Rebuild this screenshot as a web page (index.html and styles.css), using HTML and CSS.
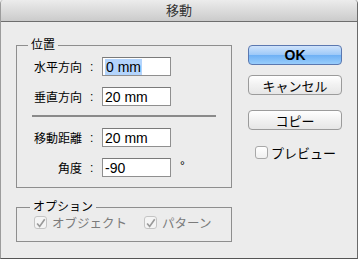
FILE: index.html
```html
<!DOCTYPE html>
<html lang="ja">
<head>
  <meta charset="UTF-8">
  <title>移動</title>
  <link rel="stylesheet" href="styles.css">
</head>
<body>
  <div class="window">
    <div class="titlebar">移動</div>

    <div class="dialog">
      <div class="main">
        <fieldset class="group group-position">
          <legend>位置</legend>
          <div class="row">
            <span class="label">水平方向</span><span class="colon">:</span>
            <div class="field"><span class="selected">0 mm</span></div>
          </div>
          <div class="row">
            <span class="label">垂直方向</span><span class="colon">:</span>
            <div class="field">20 mm</div>
          </div>
          <div class="separator"></div>
          <div class="row">
            <span class="label">移動距離</span><span class="colon">:</span>
            <div class="field">20 mm</div>
          </div>
          <div class="row">
            <span class="label">角度</span><span class="colon">:</span>
            <div class="field">-90</div>
            <span class="unit">°</span>
          </div>
        </fieldset>

        <fieldset class="group group-options">
          <legend>オプション</legend>
          <div class="check-row">
            <label class="check disabled">
              <span class="box">
                <svg width="13" height="13" viewBox="0 0 13 13"><path d="M2.5 6.5 L5.5 10 L11.5 1.5" fill="none" stroke="#9a9a9a" stroke-width="2"/></svg>
              </span>オブジェクト
            </label>
            <label class="check disabled">
              <span class="box">
                <svg width="13" height="13" viewBox="0 0 13 13"><path d="M2.5 6.5 L5.5 10 L11.5 1.5" fill="none" stroke="#9a9a9a" stroke-width="2"/></svg>
              </span>パターン
            </label>
          </div>
        </fieldset>
      </div>

      <div class="side">
        <button class="btn btn-default">OK</button>
        <button class="btn btn-cancel">キャンセル</button>
        <button class="btn btn-copy">コピー</button>
        <label class="check preview"><span class="box"></span>プレビュー</label>
      </div>
    </div>
  </div>
</body>
</html>
```

FILE: styles.css
```css
body {
  margin: 0;
  font-family: 'Liberation Sans', 'Noto Sans CJK JP', sans-serif;
  font-size: 12px;
  color: #000;
  background: #ececec;
}

.window {
  width: 358px;
  height: 259px;
  box-sizing: border-box;
  background: #ececec;
  border-left: 1px solid #9c9c9c;
  border-right: 1px solid #6a6a6a;
  border-bottom: 1px solid #555;
  border-radius: 4px 4px 0 0;
  overflow: hidden;
}

.titlebar {
  height: 21px;
  line-height: 21px;
  text-align: center;
  font-size: 13px;
  color: #333;
  background: linear-gradient(#ececec, #cbcbcb);
  border-bottom: 1px solid #6e6e6e;
}

.dialog {
  display: flex;
  gap: 16px;
}

.main {
  padding: 16px 0 0 15px;
  display: flex;
  flex-direction: column;
  gap: 12px;
}

.group {
  width: 216px;
  box-sizing: border-box;
  margin: 0;
  min-width: 0;
  border: 1px solid #8e8e8e;
  padding: 5px 15px 10px;
}

.group legend {
  margin-left: -4px;
  padding: 0 3px;
  line-height: 14px;
  font-size: 12px;
}

.row {
  display: flex;
  align-items: center;
  height: 19px;
  margin-bottom: 11px;
}

.row:last-child {
  margin-bottom: 0;
}

.label {
  width: 50px;
  text-align: right;
}

.colon {
  width: 20px;
  padding-left: 8px;
  box-sizing: border-box;
}

.field {
  width: 69px;
  height: 19px;
  box-sizing: border-box;
  background: #fff;
  border: 1px solid #8f8f8f;
  border-top-color: #7a7a7a;
  padding: 1px 0 0 2px;
  font-size: 14px;
  line-height: 16px;
}

.selected {
  background: #b3d4fc;
  padding: 0 1px;
}

.unit {
  margin: -4px 0 0 9px;
  font-size: 12px;
}

.separator {
  height: 2px;
  background: #8a8a8a;
  margin: -2px 0 11px;
}

.group-options {
  padding: 1px 15px 11px 17px;
}

.check-row {
  display: flex;
  gap: 17px;
}

.check {
  display: flex;
  align-items: center;
  gap: 5px;
  height: 15px;
  font-size: 12.5px;
}

.check.disabled {
  color: #7b7b7b;
}

.box {
  width: 13px;
  height: 13px;
  box-sizing: border-box;
  border: 1px solid #a8a8a8;
  border-radius: 3px;
  background: linear-gradient(#fff, #f0f0f0);
  display: flex;
}

.check.disabled .box {
  border-color: #c4c4c4;
  background: #f4f4f4;
}

.side {
  padding-top: 23px;
  display: flex;
  flex-direction: column;
}

.btn {
  width: 94px;
  height: 20px;
  margin: 0;
  padding: 0;
  font-family: inherit;
  font-size: 13px;
  color: #000;
  border: 1px solid #9b9b9b;
  border-radius: 4px;
  background: linear-gradient(#ffffff, #f1f1f1 50%, #e6e6e6);
}

.btn-default {
  font-weight: bold;
  font-size: 14px;
  border-color: #5b78b0;
  background: linear-gradient(#cfe3fb, #9cc8f8 50%, #6eb0f5 51%, #98cdfb);
}

.btn-cancel {
  margin-top: 10px;
}

.btn-copy {
  margin-top: 15px;
}

.preview {
  margin: 15px 0 0 7px;
  gap: 3px;
  font-size: 13px;
}
```
